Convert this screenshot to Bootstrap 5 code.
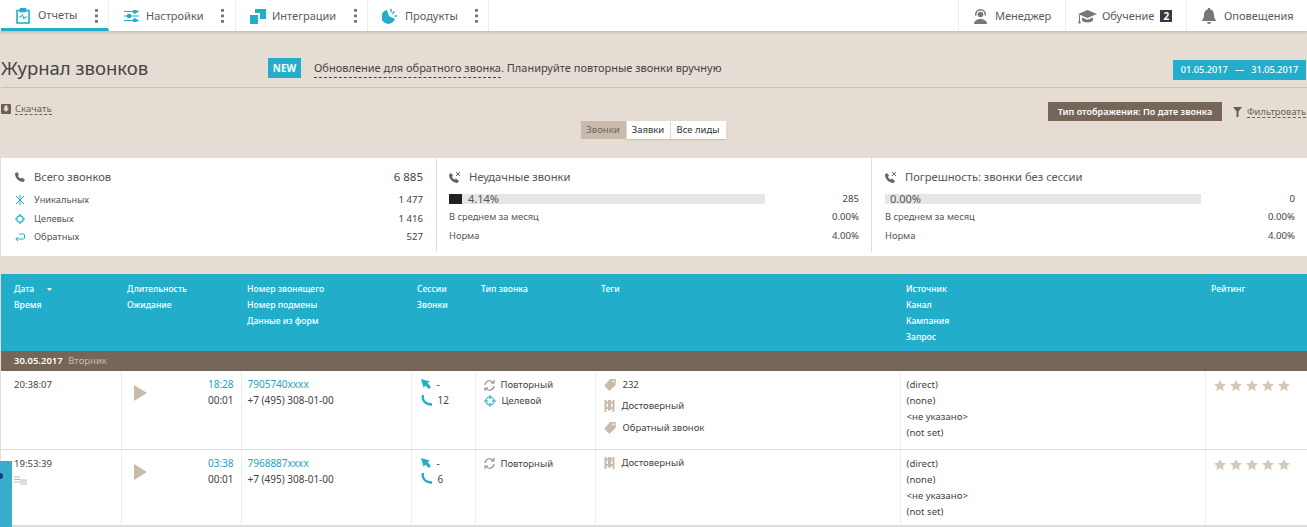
<!DOCTYPE html>
<html lang="ru"><head><meta charset="utf-8"><title>Журнал звонков</title>
<link href="https://cdn.jsdelivr.net/npm/bootstrap@5.3.0/dist/css/bootstrap.min.css" rel="stylesheet">
<style>
html,body{height:527px;overflow:hidden}
body{background:#e5ddd3;font-family:"Noto Sans","Open Sans",sans-serif;font-size:10px;color:#444;position:relative}
svg{display:block;flex:none}
.topbar{height:31px;background:#fff;box-shadow:0 2px 2px rgba(0,0,0,.12);font-size:11px;color:#5b5b5b}
.topitem{height:31px;border-right:1px solid #eee;gap:6px;padding-left:14px;padding-top:1px;position:relative}
.topitem.r{border-right:0;border-left:1px solid #eee;padding-left:14px}
.w1{width:108px;margin-left:1px;padding-left:15px;gap:8px;border-bottom:3px solid #22aecb;padding-top:3px}
.w2{width:127px;padding-left:15px;gap:7px}.w3{width:132px}.w4{width:121px;gap:8px}
.wr1{width:107px;gap:7px}.wr2{width:121px;gap:5px}.wr3{width:121px;gap:7px}
.topitem.wr2{padding-left:12px}
.dots{position:absolute;top:9px;width:3px;height:14px;background:radial-gradient(circle at 1.5px 1.5px,#777 1.5px,transparent 1.6px) 0 0/3px 5.5px repeat-y}
.d1{left:94px}.d2{left:112px}.d3{left:118px}.d4{left:107px}
.cnt{background:#3a3a3a;color:#fff;font-weight:700;font-size:10px;width:12px;height:12px;line-height:12px;text-align:center;margin-left:1px}
.headrow{height:57px;border-bottom:1px solid #c9c0b4;margin-left:1px;position:relative}
.ttl{font-size:18.5px;font-weight:400;color:#444;margin:18px 0 0 0;width:267px;line-height:24px}
.newb{background:#22aecb;color:#fff;font-weight:700;font-size:10px;width:33px;height:20px;line-height:20px;text-align:center;margin:17px 13px 0 0}
.promo{font-size:11px;color:#444;margin-top:19px}
.promo u{text-decoration:none;border-bottom:1px dashed #444;padding-bottom:2px}
.dates{background:#22aecb;color:#fff;font-size:9.2px;font-weight:500;width:133px;height:20px;line-height:20px;text-align:center;position:absolute;right:1px;top:29px;white-space:pre}
.tools{height:32px;padding:15px 1px 0 1px}
.dl{font-size:9.5px;color:#6b5f55;border-bottom:1px dashed #6b5f55;line-height:11px;margin-left:4px}
.viewr{margin-top:-1px}
.viewb{background:#756658;color:#fff;font-size:9.1px;font-weight:600;width:174px;height:19px;line-height:19px;text-align:center;margin-right:11px}
.fl{font-size:9.4px;color:#6b5f55;border-bottom:1px dashed #6b5f55;line-height:11px;margin-left:5px}
.tabsw{height:38px;padding-top:1px}
.tabg{height:18px}
.tabx{font-size:9.5px;height:18px;line-height:18px;text-align:center;background:#fff;color:#333;border-right:1px solid #e5ddd3;box-shadow:0 1px 1px rgba(0,0,0,.12)}
.tabx.on{background:#c9bbab;color:#6f6559;box-shadow:none}
.t1{width:46px}.t2{width:44px}.t3{width:56px}
.stats{height:98px;background:#fff;margin:0 0 18px 1px}
.stc{height:94px;border-right:1px solid #ddd;padding-top:10px}
.stc.s1{padding-left:14px;padding-right:13px;width:436px;flex:none}
.stc.s2{width:435px;flex:none;padding-left:12px;padding-right:12px}
.stc.s3{flex:1;border-right:0;padding-left:13px;padding-right:12px}
.sth{font-size:11.2px;color:#555;height:17px;line-height:17px;margin-bottom:6px}
.sth .nm{margin-left:9px}
.sth .nm.nx{margin-left:8px}
.phic{margin-top:4px}
.sub{font-size:9.3px;height:18.5px;line-height:18.5px;color:#555}
.sub .nm{margin-left:9px}
.num{color:#444;font-size:9.6px}
.num.bign{font-size:11.5px}
.bartrack{width:316px;height:10px;background:#e6e6e6;font-size:11px;line-height:10px;position:relative;padding-left:19px;color:#555}
.bartrack.zero{padding-left:5px}
.barfill{position:absolute;left:0;top:0;height:10px;background:#222}
.barrow{height:14px;font-size:11px;margin-top:9px}
.barrow .num{line-height:10px}
.grid{margin-left:1px;width:1306px;background:#fff;table-layout:fixed;border-collapse:collapse;font-size:10px;color:#444}
.grid td{padding:5px 0 0 6px;line-height:16px;vertical-align:top;border-right:1px solid #eee;border-bottom:1px solid #ddd}
.grid td:last-child{border-right:0}
.grid .hd td{background:#22aecb;color:#fff;font-weight:500;font-size:8.6px;height:77px;border:0;padding:7px 0 0 13px}
.grid .hd td.h2{padding-left:6px}
.grid .dt td{background:#756658;color:#fff;height:20px;line-height:20px;padding:0 0 0 13px;border:0;font-weight:600;font-size:9.5px}
.grid .dt span{color:#c9bbab;font-weight:400;margin-left:3px}
.r1 td{height:78px}.r2 td{height:76px}
.cw1{width:120px}.cw2{width:120px}.cw3{width:170px}.cw4{width:64px}.cw5{width:120px}.cw6{width:305px}.cw7{width:305px}.cw8{width:102px}
.grid td.tm{padding:6px 0 0 13px;font-size:9.6px}
.lnk{color:#22a3be}
.grid td.dur{padding:5px 7px 0 0;text-align:right;position:relative}
.plyw{position:absolute;left:12px;top:14px}
.grid td.ses{padding-left:9px}
.ln{gap:6px;height:16px;align-items:center}
.grid td.typ{padding:6px 0 0 8px;font-size:9.5px}
.grid td.tgs{padding:6px 0 0 8px;font-size:9.5px}
.grid td.src{padding-top:6px;font-size:9.6px}
.tg{height:21.5px;gap:7px;align-items:center}
.tg0{margin-top:-3px}
.stars{gap:4px;padding:4px 0 0 2px}
.sidew{position:absolute;left:0;top:461px;width:12px;height:66px;background:#3aaccb}
.sidew i{position:absolute;left:-3px;top:12px;width:6px;height:6px;border-radius:50%;background:#123a7a}
.noteic{margin-top:4px}
</style></head><body>
<svg width="0" height="0" class="position-absolute"><defs>
<path id="st" d="M6 0l1.800 3.800 4.200.5-3.100 2.800.8 4L6 9.100l-3.700 2 .8-4L0 4.300l4.200-.5z"/>
<path id="tagi" fill-rule="evenodd" d="M6 0h6v6l-6.500 6.500L0 7zM9.500 1.500a1 1 0 1 0 0 2 1 1 0 0 0 0-2z"/>
<path id="gate" d="M0 0h2v1.500h1.500V0h3v1.500H8V0h2v12H8V9H6.500v1.500h-3V9H2v3H0zM2 3.500V7h1.500V3.500zM6.500 3.500V7H8V3.500z"/>
<path id="ptr" d="M0 0l9 2.500-2.500 1.500L10 8 8 10 4.200 6.500 2.700 9z"/>
<path id="hnd" d="M2 0c-1.500 6 3 9.500 9 9.500" fill="none" stroke="#22aecb" stroke-width="2.400"/>
<path id="rpt" d="M1 5a4.500 4.500 0 0 1 8-2.500M10 6a4.500 4.500 0 0 1-8 2.500M10 0v3H7M1 11V8h3" fill="none" stroke="#888" stroke-width="1.100"/>
<path id="phx" d="M2 1l2 2.500-1 1.500c.6 1 1.400 2 2.500 2.500L7 6.500 10 9 8.500 11C4 11 0 7 0 2.500z"/>
</defs></svg>
<nav class="topbar d-flex justify-content-between">
 <div class="d-flex">
  <div class="topitem d-flex align-items-center w1"><svg width="14" height="16" viewBox="0 0 14 16" fill="none" stroke="#22aecb" stroke-width="1.6"><rect x="1" y="2.500" width="12" height="12.500"/><rect x="4.500" y="0.500" width="5" height="3" fill="#22aecb"/><path d="M3 9h2l1.500-2.500L8 11l1-2h2" stroke-width="1"/></svg><span>Отчеты</span><span class="dots d1"></span></div>
  <div class="topitem d-flex align-items-center w2"><svg width="15" height="12" viewBox="0 0 15 12" fill="none" stroke="#22aecb" stroke-width="1.200"><path d="M0 1.500h15M0 6h15M0 10.500h15"/><circle cx="11" cy="1.500" r="1.700" fill="#22aecb"/><circle cx="5" cy="6" r="1.700" fill="#22aecb"/><circle cx="11" cy="10.500" r="1.700" fill="#22aecb"/></svg><span>Настройки</span><span class="dots d2"></span></div>
  <div class="topitem d-flex align-items-center w3"><svg width="16" height="15" viewBox="0 0 16 15" fill="#22aecb"><path d="M0 6h8v9H0z"/><path d="M5 0h11v10h-6V4H5z"/></svg><span>Интеграции</span><span class="dots d3"></span></div>
  <div class="topitem d-flex align-items-center w4"><svg width="15" height="15" viewBox="0 0 15 15" fill="#22aecb"><path d="M5 1a7 7 0 1 0 8 9L7 7z"/><path d="M8 0l2 0-1 5zM11 2l2 1-3 3zM15 6v2l-4-1z"/></svg><span>Продукты</span><span class="dots d4"></span></div>
 </div>
 <div class="d-flex">
  <div class="topitem r d-flex align-items-center wr1"><svg width="15" height="15" viewBox="0 0 15 15" fill="#777"><path d="M7.500 0a5.500 5.500 0 0 0-5.500 5.500v1h1.500v-1a4 4 0 0 1 8 0v1H13v-1A5.500 5.500 0 0 0 7.500 0z"/><circle cx="7.500" cy="5.500" r="2.800"/><path d="M1 15c0-3 3-5 6.500-5S14 12 14 15z"/></svg><span>Менеджер</span></div>
  <div class="topitem r d-flex align-items-center wr2"><svg width="19" height="15" viewBox="0 0 19 15" fill="#777"><path d="M9.500 1 19 5l-9.500 4L0 5z"/><path d="M4 8.500v3c2 2.500 9 2.500 11 0v-3l-5.500 2.300z"/><rect x="1" y="6" width="1" height="6"/><rect x="0.500" y="12" width="2" height="2.500"/></svg><span>Обучение</span><span class="cnt">2</span></div>
  <div class="topitem r d-flex align-items-center wr3"><svg width="16" height="16" viewBox="0 0 16 16" fill="#777"><path d="M8 0c-1 0-1.500.7-1.500 1.500C4 2.300 3 4.500 3 7c0 3-1 4.500-2.500 6h15C14 11.500 13 10 13 7c0-2.500-1-4.700-3.500-5.500C9.500.7 9 0 8 0z"/><path d="M6 14h4a2 2 0 0 1-4 0z"/></svg><span>Оповещения</span></div>
 </div>
</nav>
<header class="headrow d-flex align-items-center">
 <h1 class="ttl">Журнал звонков</h1>
 <span class="newb">NEW</span>
 <span class="promo"><u>Обновление для обратного звонка</u>. Планируйте повторные звонки вручную</span>
 <span class="dates">01.05.2017   —   31.05.2017</span>
</header>
<div class="tools d-flex justify-content-between align-items-start">
 <div class="d-flex align-items-center"><svg width="10" height="10" viewBox="0 0 10 10"><rect width="10" height="10" rx="1" fill="#6b5f55"/><path d="M3.500 1.500h3v3H8L5 8 2 4.500h1.500z" fill="#e5ddd3"/></svg><span class="dl">Скачать</span></div>
 <div class="d-flex align-items-center viewr"><span class="viewb">Тип отображения: По дате звонка</span><svg width="9" height="10" viewBox="0 0 9 10" fill="#6b5f55"><path d="M0 0h9L5.500 4.500V10h-2V4.500z"/></svg><span class="fl">Фильтровать</span></div>
</div>
<div class="tabsw d-flex justify-content-center"><div class="d-flex tabg"><span class="tabx on t1">Звонки</span><span class="tabx t2">Заявки</span><span class="tabx t3">Все лиды</span></div></div>
<section class="stats d-flex">
 <div class="stc s1">
  <div class="sth d-flex"><svg class="phic" width="10" height="10" viewBox="0 0 10 10" fill="#666"><path d="M2 0l2 2.500-1 1.500c.6 1 1.400 2 2.500 2.500L7 5.500 10 8 8.500 10C4 10 0 6 0 1.500z"/></svg><span class="nm">Всего звонков</span><span class="num bign ms-auto">6 885</span></div>
  <div class="sub d-flex align-items-center"><svg width="10" height="10" viewBox="0 0 10 10" stroke="#22aecb" stroke-width="1" fill="none"><path d="M5 0v10M1 1l8 8M9 1l-8 8"/></svg><span class="nm">Уникальных</span><span class="num ms-auto">1 477</span></div>
  <div class="sub d-flex align-items-center"><svg width="10" height="10" viewBox="0 0 10 10" stroke="#22aecb" stroke-width="1.200" fill="none"><circle cx="5" cy="5" r="3.200"/><path d="M5 0v2M5 8v2M0 5h2M8 5h2"/></svg><span class="nm">Целевых</span><span class="num ms-auto">1 416</span></div>
  <div class="sub d-flex align-items-center"><svg width="10" height="9" viewBox="0 0 10 9" stroke="#22aecb" stroke-width="1" fill="none"><path d="M4 1h4.500a1 1 0 0 1 1 1v3a1 1 0 0 1-1 1H1M3 4 .8 6 3 8"/></svg><span class="nm">Обратных</span><span class="num ms-auto">527</span></div>
 </div>
 <div class="stc s2">
  <div class="sth d-flex"><svg class="phic" width="12" height="11" viewBox="0 0 12 11" fill="#666"><use href="#phx"/><path d="M7 0l4 4M11 0 7 4" stroke="#666"/></svg><span class="nm nx">Неудачные звонки</span></div>
  <div class="barrow d-flex align-items-start"><div class="bartrack"><div class="barfill" style="width:13px"></div>4.14%</div><span class="num ms-auto">285</span></div>
  <div class="sub d-flex"><span>В среднем за месяц</span><span class="num ms-auto">0.00%</span></div>
  <div class="sub d-flex"><span>Норма</span><span class="num ms-auto">4.00%</span></div>
 </div>
 <div class="stc s3">
  <div class="sth d-flex"><svg class="phic" width="12" height="11" viewBox="0 0 12 11" fill="#666"><use href="#phx"/><path d="M7 0l4 4M11 0 7 4" stroke="#666"/></svg><span class="nm nx">Погрешность: звонки без сессии</span></div>
  <div class="barrow d-flex align-items-start"><div class="bartrack zero">0.00%</div><span class="num ms-auto">0</span></div>
  <div class="sub d-flex"><span>В среднем за месяц</span><span class="num ms-auto">0.00%</span></div>
  <div class="sub d-flex"><span>Норма</span><span class="num ms-auto">4.00%</span></div>
 </div>
</section>
<table class="grid">
 <colgroup><col class="cw1"><col class="cw2"><col class="cw3"><col class="cw4"><col class="cw5"><col class="cw6"><col class="cw7"><col class="cw8"></colgroup>
 <tr class="hd"><td><div class="d-flex align-items-center"><span style="width:33px">Дата</span><svg width="5" height="3" viewBox="0 0 5 3" fill="#fff"><path d="M0 0h5L2.500 3z"/></svg></div>Время</td><td class="h2">Длительность<br>Ожидание</td><td class="h2">Номер звонящего<br>Номер подмены<br>Данные из форм</td><td class="h2">Сессии<br>Звонки</td><td class="h2">Тип звонка</td><td class="h2">Теги</td><td class="h2">Источник<br>Канал<br>Кампания<br>Запрос</td><td class="h2">Рейтинг</td></tr>
 <tr class="dt"><td colspan="8">30.05.2017 <span>Вторник</span></td></tr>
 <tr class="r1">
  <td class="tm">20:38:07</td>
  <td class="dur"><svg class="plyw" width="13" height="16" viewBox="0 0 13 16" fill="#c9bbab"><path d="M0 0l13 8L0 16z"/></svg><span class="lnk">18:28</span><br>00:01</td>
  <td><span class="lnk">7905740xxxx</span><br>+7 (495) 308-01-00</td>
  <td class="ses"><div class="d-flex ln"><svg width="10" height="10" viewBox="0 0 10 10" fill="#22aecb"><use href="#ptr"/></svg><span>-</span></div><div class="d-flex ln"><svg width="11" height="11" viewBox="0 0 11 11"><use href="#hnd"/></svg><span>12</span></div></td>
  <td class="typ"><div class="d-flex ln"><svg width="11" height="11" viewBox="0 0 11 11"><use href="#rpt"/></svg><span>Повторный</span></div><div class="d-flex ln"><svg width="12" height="12" viewBox="0 0 12 12" fill="none" stroke="#22aecb" stroke-width="1.100"><circle cx="6" cy="6" r="4"/><path d="M6 0v4M6 8v4M0 6h4M8 6h4"/></svg><span>Целевой</span></div></td>
  <td class="tgs"><div class="d-flex tg tg0"><svg width="12" height="12" viewBox="0 0 12 12.500" fill="#c9bbab"><use href="#tagi"/></svg><span>232</span></div><div class="d-flex tg"><svg width="11" height="12" viewBox="0 0 10 12" fill="#c9bbab"><use href="#gate"/></svg><span>Достоверный</span></div><div class="d-flex tg"><svg width="12" height="12" viewBox="0 0 12 12.500" fill="#c9bbab"><use href="#tagi"/></svg><span>Обратный звонок</span></div></td>
  <td class="src">(direct)<br>(none)<br>&lt;не указано&gt;<br>(not set)</td>
  <td><div class="d-flex stars"><svg width="12" height="11" viewBox="0 0 12 11" fill="#d3c8ba"><use href="#st"/></svg><svg width="12" height="11" viewBox="0 0 12 11" fill="#d3c8ba"><use href="#st"/></svg><svg width="12" height="11" viewBox="0 0 12 11" fill="#d3c8ba"><use href="#st"/></svg><svg width="12" height="11" viewBox="0 0 12 11" fill="#d3c8ba"><use href="#st"/></svg><svg width="12" height="11" viewBox="0 0 12 11" fill="#d3c8ba"><use href="#st"/></svg></div></td>
 </tr>
 <tr class="r2">
  <td class="tm">19:53:39<svg class="noteic" width="13" height="9" viewBox="0 0 13 9" fill="none" stroke="#bbb" stroke-width="1"><path d="M0 1h6M0 3.500h6M0 6h6M6 4h7M6 6h7M6 8h7"/></svg></td>
  <td class="dur"><svg class="plyw" width="13" height="16" viewBox="0 0 13 16" fill="#c9bbab"><path d="M0 0l13 8L0 16z"/></svg><span class="lnk">03:38</span><br>00:01</td>
  <td><span class="lnk">7968887xxxx</span><br>+7 (495) 308-01-00</td>
  <td class="ses"><div class="d-flex ln"><svg width="10" height="10" viewBox="0 0 10 10" fill="#22aecb"><use href="#ptr"/></svg><span>-</span></div><div class="d-flex ln"><svg width="11" height="11" viewBox="0 0 11 11"><use href="#hnd"/></svg><span>6</span></div></td>
  <td class="typ"><div class="d-flex ln"><svg width="11" height="11" viewBox="0 0 11 11"><use href="#rpt"/></svg><span>Повторный</span></div></td>
  <td class="tgs"><div class="d-flex tg tg0"><svg width="11" height="12" viewBox="0 0 10 12" fill="#c9bbab"><use href="#gate"/></svg><span>Достоверный</span></div></td>
  <td class="src">(direct)<br>(none)<br>&lt;не указано&gt;<br>(not set)</td>
  <td><div class="d-flex stars"><svg width="12" height="11" viewBox="0 0 12 11" fill="#d3c8ba"><use href="#st"/></svg><svg width="12" height="11" viewBox="0 0 12 11" fill="#d3c8ba"><use href="#st"/></svg><svg width="12" height="11" viewBox="0 0 12 11" fill="#d3c8ba"><use href="#st"/></svg><svg width="12" height="11" viewBox="0 0 12 11" fill="#d3c8ba"><use href="#st"/></svg><svg width="12" height="11" viewBox="0 0 12 11" fill="#d3c8ba"><use href="#st"/></svg></div></td>
 </tr>
</table>
<div class="sidew"><i></i></div>
<script src="https://cdn.jsdelivr.net/npm/bootstrap@5.3.0/dist/js/bootstrap.bundle.min.js"></script>
</body></html>
